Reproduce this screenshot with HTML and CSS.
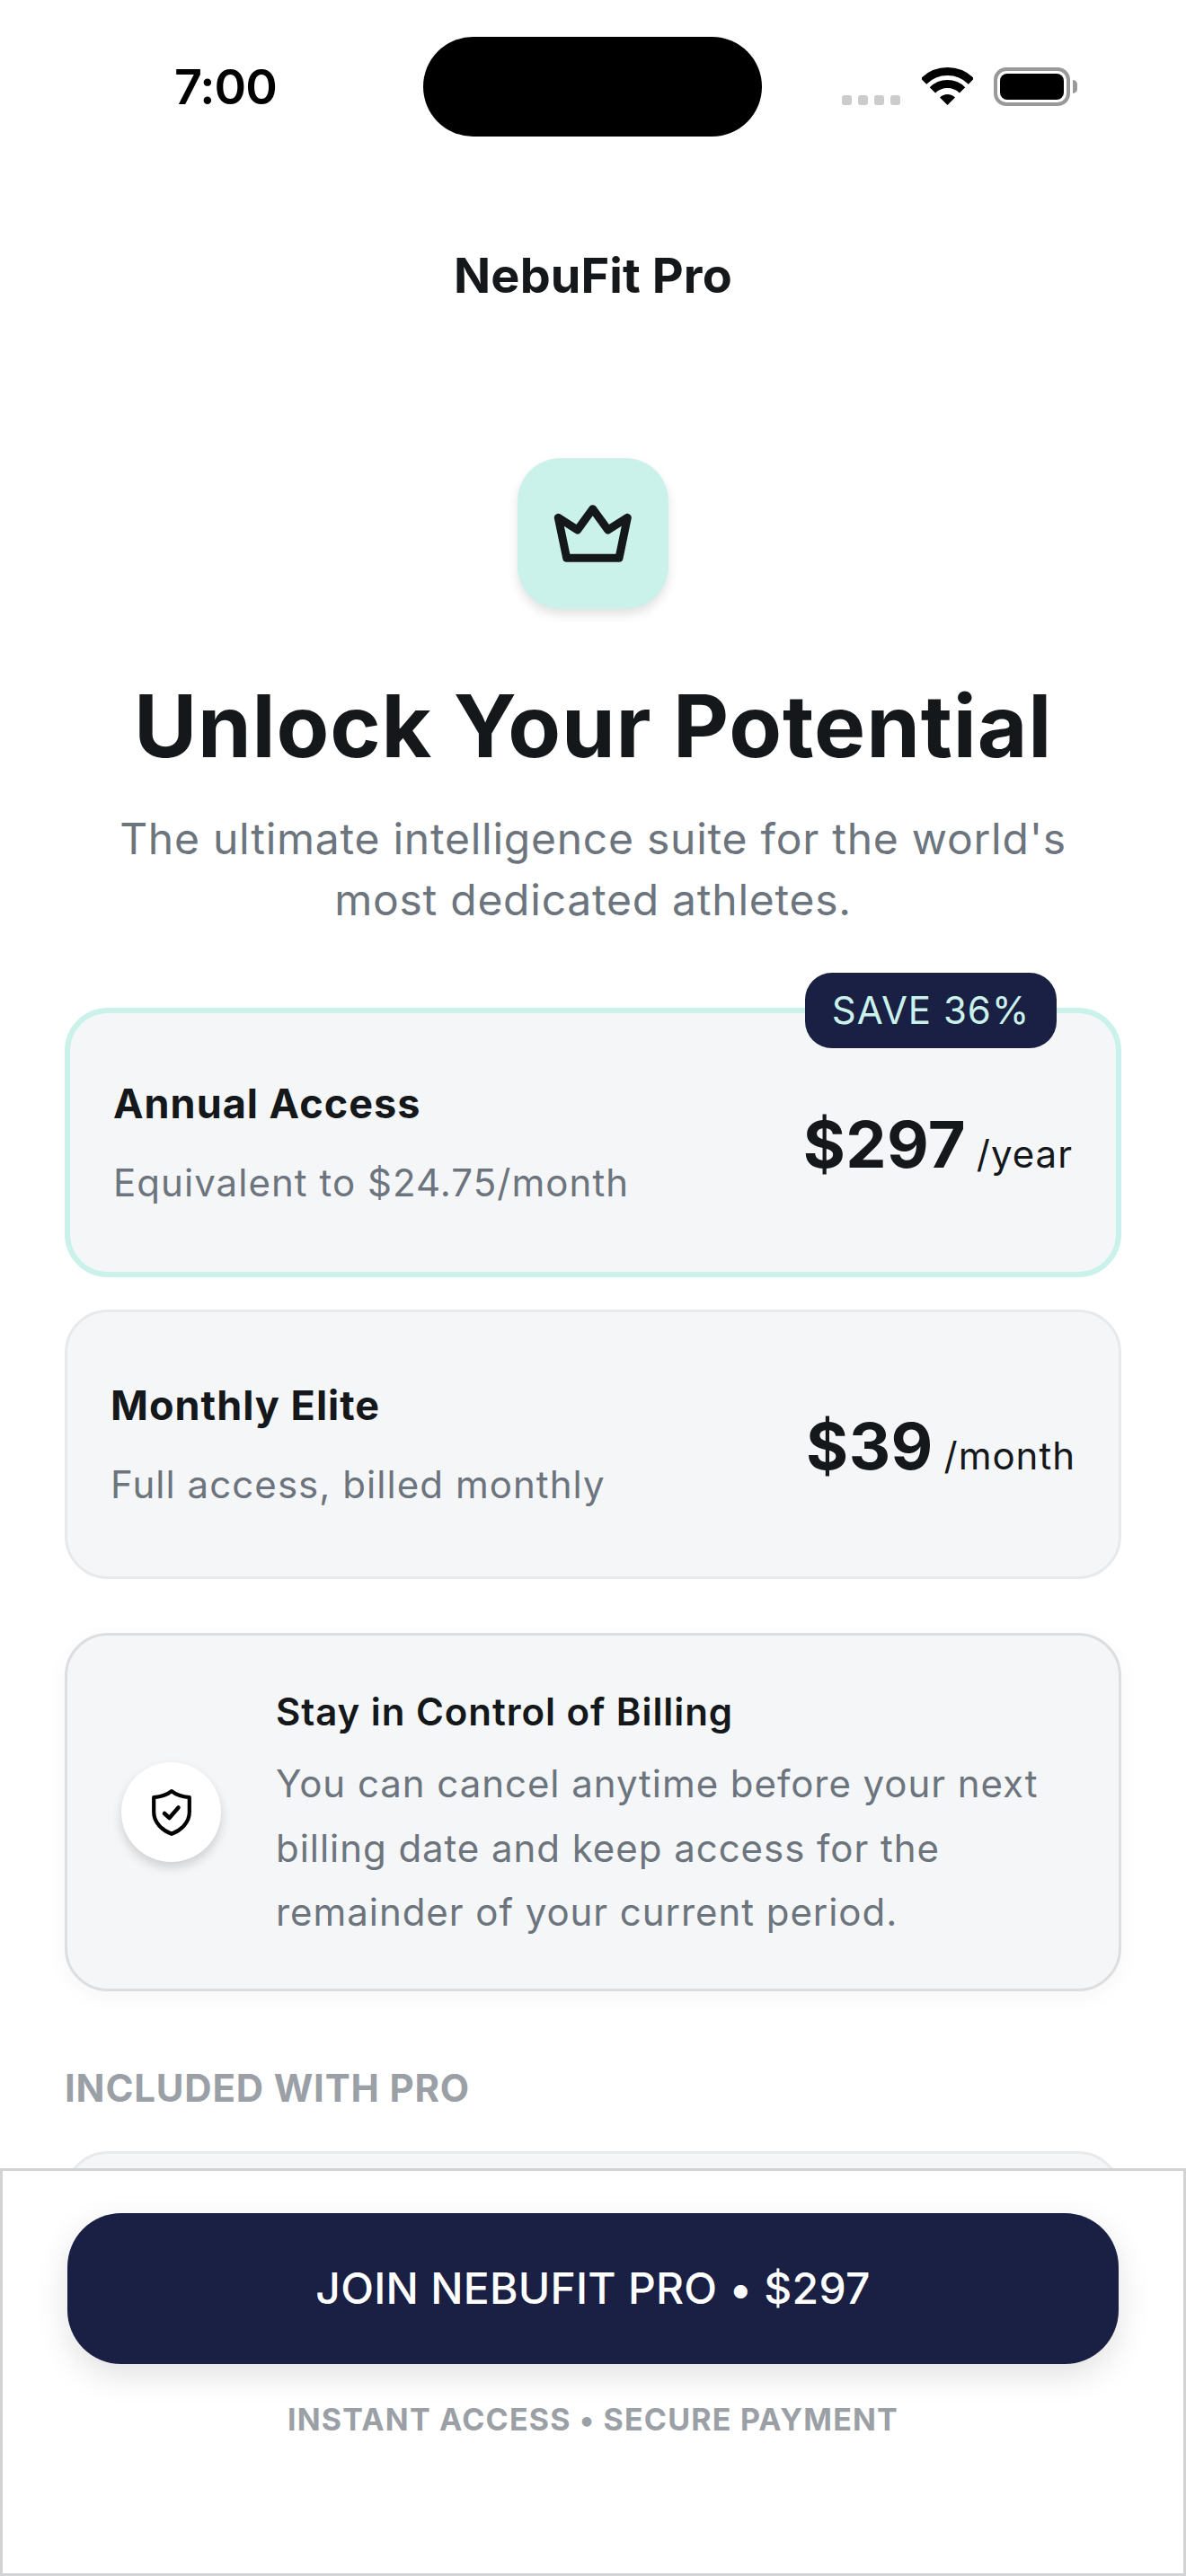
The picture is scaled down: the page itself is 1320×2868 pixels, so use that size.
FILE: index.html
```html
<!DOCTYPE html>
<html lang="en">
  <head>
    <meta charset="UTF-8" />
    <meta name="viewport" content="width=device-width, initial-scale=1.0" />
    <title>NebuFit Pro</title>
    <link rel="stylesheet" href="styles.css">
  </head>
  <body>
    <div class="phone">
      <div class="status-bar">
        <span class="time">7:00</span>
        <div class="island"></div>
        <div class="status-icons">
          <div class="signal"><i></i><i></i><i></i><i></i></div>
          <svg class="wifi" width="57" height="42" viewBox="0 0 57 42">
            <path d="M2 15.5A37.5 37.5 0 0 1 55 15.5" fill="none" stroke="#000" stroke-width="9" />
            <path d="M11.9 25.4A23.5 23.5 0 0 1 45.1 25.4" fill="none" stroke="#000" stroke-width="9" />
            <path d="M28.5 42L20 33.5A12 12 0 0 1 37 33.5Z" fill="#000" />
          </svg>
          <div class="battery"><div class="battery-level"></div></div>
          <div class="battery-nub"></div>
        </div>
      </div>

      <h1 class="app-title">NebuFit Pro</h1>

      <div class="crown-tile">
        <svg width="90" height="66" viewBox="0 0 90 66">
          <path d="M6.3 15.3L27.7 29L44.7 5.7L61.7 29L83.3 15.3L74 60.3H15.7Z" fill="none" stroke="#14181b" stroke-width="9" stroke-linejoin="round" />
        </svg>
      </div>

      <h2 class="headline">Unlock Your Potential</h2>
      <p class="subhead">The ultimate intelligence suite for the world's<br />most dedicated athletes.</p>

      <div class="plan plan-selected">
        <span class="badge">SAVE 36%</span>
        <div>
          <div class="plan-name">Annual Access</div>
          <div class="plan-note">Equivalent to $24.75/month</div>
        </div>
        <div class="plan-price"><strong>$297</strong> <span>/year</span></div>
      </div>

      <div class="plan">
        <div>
          <div class="plan-name">Monthly Elite</div>
          <div class="plan-note">Full access, billed monthly</div>
        </div>
        <div class="plan-price"><strong>$39</strong> <span>/month</span></div>
      </div>

      <div class="billing-card">
        <div class="shield-circle">
          <svg width="44" height="52" viewBox="0 0 44 52">
            <path d="M22 2.2C26.5 6 32 8.2 41.8 9.2V25.5C41.8 37.5 32 46 22 49.8C12 46 2.2 37.5 2.2 25.5V9.2C12 8.2 17.5 6 22 2.2Z" fill="none" stroke="#000" stroke-width="4.2" stroke-linejoin="round" />
            <path d="M14 27L19.5 32L29.5 20.5" fill="none" stroke="#000" stroke-width="4.5" stroke-linecap="round" stroke-linejoin="round" />
          </svg>
        </div>
        <div class="billing-body">
          <div class="billing-title">Stay in Control of Billing</div>
          <p class="billing-text">You can cancel anytime before your next<br />billing date and keep access for the<br />remainder of your current period.</p>
        </div>
      </div>

      <div class="section-label">INCLUDED WITH PRO</div>
      <div class="feature-card"></div>

      <div class="footer">
        <button class="join-button">JOIN NEBUFIT PRO • $297</button>
        <div class="footer-note">INSTANT ACCESS • SECURE PAYMENT</div>
      </div>
    </div>
  </body>
</html>
```

FILE: styles.css
```css
body {
  margin: 0;
  background: #fff;
  font-family: Inter, "Noto Sans", sans-serif;
  color: #14181b;
}
.phone {
  position: relative;
  width: 1320px;
  height: 2868px;
  overflow: hidden;
  background: #fff;
}
.status-bar {
  display: flex;
  align-items: center;
  height: 111px;
  padding: 41px 0 0 194px;
}
.time {
  width: 277px;
  font-size: 54px;
  font-weight: 600;
  letter-spacing: -1px;
  color: #000;
}
.island {
  width: 377px;
  height: 111px;
  border-radius: 56px;
  background: #000;
}
.status-icons {
  display: flex;
  align-items: flex-end;
  height: 43px;
  margin-left: 89px;
}
.signal {
  display: flex;
  gap: 7px;
  margin-right: 24px;
  margin-bottom: 1px;
}
.signal i {
  width: 11px;
  height: 11px;
  border-radius: 3px;
  background: #ccc;
}
.wifi {
  display: block;
  margin-bottom: 1px;
  margin-right: 23px;
}
.battery {
  box-sizing: border-box;
  width: 85px;
  height: 43px;
  padding: 3px;
  border: 4px solid #999;
  border-radius: 14px;
}
.battery-level {
  height: 100%;
  border-radius: 8px;
  background: #000;
}
.battery-nub {
  width: 5px;
  height: 15px;
  margin: 0 0 14px 3px;
  border-radius: 0 5px 5px 0;
  background: #999;
}
.app-title {
  margin: 122px 0 0;
  font-size: 54px;
  line-height: 66px;
  font-weight: 700;
  letter-spacing: 0.1px;
  text-align: center;
}
.crown-tile {
  display: flex;
  align-items: center;
  justify-content: center;
  width: 168px;
  height: 168px;
  margin: 170px auto 0;
  border-radius: 48px;
  background: #caf2ea;
  box-shadow: 0 6px 12px rgba(0, 0, 0, 0.12);
}
.headline {
  margin: 72px 0 0;
  font-size: 96px;
  line-height: 116px;
  font-weight: 700;
  letter-spacing: 0.85px;
  text-align: center;
}
.subhead {
  margin: 34px 0 0;
  font-size: 48px;
  line-height: 68px;
  letter-spacing: 0.75px;
  color: #6c757d;
  text-align: center;
}
.plan {
  position: relative;
  display: flex;
  align-items: center;
  justify-content: space-between;
  box-sizing: border-box;
  height: 300px;
  margin: 36px 72px 0;
  padding: 2px 48px 0;
  border: 3px solid #e8e9eb;
  border-radius: 48px;
  background: #f5f6f8;
}
.plan-selected {
  margin-top: 86px;
  border: 6px solid #caf2ea;
}
.badge {
  position: absolute;
  top: -45px;
  right: 66px;
  box-sizing: border-box;
  width: 280px;
  height: 84px;
  border-radius: 30px;
  background: #1a1f44;
  color: #caf2ea;
  font-size: 42px;
  line-height: 84px;
  letter-spacing: 1px;
  text-align: center;
}
.plan-name {
  font-size: 45px;
  line-height: 60px;
  font-weight: 650;
  letter-spacing: 1px;
}
.plan-note {
  margin-top: 28px;
  font-size: 42px;
  line-height: 60px;
  letter-spacing: 1.05px;
  color: #6c757d;
}
.plan-price {
  font-size: 42px;
}
.plan-price strong {
  font-size: 72px;
  font-weight: 700;
  letter-spacing: 0.4px;
}
.plan-price span {
  letter-spacing: 1px;
}
.billing-card {
  display: flex;
  align-items: center;
  gap: 61px;
  box-sizing: border-box;
  height: 399px;
  margin: 60px 72px 0;
  padding: 0 60px;
  border: 3px solid #dcdee1;
  border-radius: 48px;
  background: #f5f6f8;
  box-shadow: 0 6px 24px rgba(0, 0, 0, 0.04);
}
.shield-circle {
  display: flex;
  align-items: center;
  justify-content: center;
  flex: none;
  width: 111px;
  height: 111px;
  border-radius: 50%;
  background: #fff;
  box-shadow: 0 6px 12px rgba(0, 0, 0, 0.16);
}
.billing-body {
  padding-top: 6px;
}
.billing-title {
  font-size: 42px;
  line-height: 60px;
  font-weight: 600;
  letter-spacing: 0.95px;
}
.billing-text {
  margin: 14px 0 0;
  font-size: 42px;
  line-height: 71.5px;
  letter-spacing: 0.95px;
  color: #6c757d;
}
.section-label {
  margin: 83px 72px 0;
  font-size: 42px;
  line-height: 50px;
  font-weight: 650;
  letter-spacing: 0.8px;
  color: #9aa0a6;
}
.feature-card {
  height: 300px;
  margin: 45px 72px 0;
  border: 3px solid #e8e9eb;
  border-radius: 48px;
  background: #f5f6f8;
}
.footer {
  position: absolute;
  left: 0;
  right: 0;
  bottom: 0;
  box-sizing: border-box;
  height: 454px;
  padding: 47px 72px 0;
  border: 3px solid #d0d2d4;
  background: #fff;
}
.join-button {
  display: block;
  width: 100%;
  height: 168px;
  padding-bottom: 2px;
  border: none;
  border-radius: 60px;
  background: #1a1f44;
  color: #fff;
  font-family: inherit;
  font-size: 48px;
  font-weight: 500;
  letter-spacing: 0.25px;
  box-shadow: 0 12px 36px rgba(0, 0, 0, 0.12);
}
.footer-note {
  margin-top: 40px;
  font-size: 34px;
  line-height: 44px;
  font-weight: 700;
  letter-spacing: 1.2px;
  color: #9aa0a6;
  text-align: center;
}
```
